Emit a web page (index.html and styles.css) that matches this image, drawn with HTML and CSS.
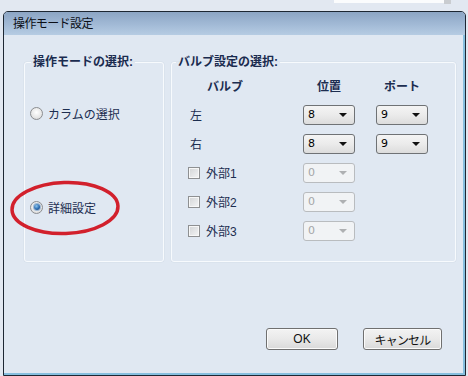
FILE: index.html
```html
<!DOCTYPE html>
<html lang="ja">
<head>
    <meta charset="UTF-8">
    <title>操作モード設定</title>
    <link rel="stylesheet" href="styles.css">
</head>
<body>
    <div class="behind-strip"></div>
    <div class="behind-tab"></div>

    <div class="window">
        <div class="titlebar">操作モード設定</div>
        <div class="client">
            <div class="groups">
                <fieldset class="group mode-group">
                    <legend>操作モードの選択:</legend>
                    <div class="radio"><span class="radio-dot"></span>カラムの選択</div>
                    <div class="radio"><span class="radio-dot checked"></span>詳細設定</div>
                </fieldset>

                <fieldset class="group valve-group">
                    <legend>バルブ設定の選択:</legend>
                    <div class="valve-grid">
                        <div class="head head-valve">バルブ</div>
                        <div class="head">位置</div>
                        <div class="head">ポート</div>

                        <div class="row-label">左</div>
                        <div class="combo">8<span class="arrow"></span></div>
                        <div class="combo">9<span class="arrow"></span></div>

                        <div class="row-label">右</div>
                        <div class="combo">8<span class="arrow"></span></div>
                        <div class="combo">9<span class="arrow"></span></div>

                        <div class="check"><span class="box"></span>外部1</div>
                        <div class="combo disabled">0<span class="arrow"></span></div>
                        <div></div>

                        <div class="check"><span class="box"></span>外部2</div>
                        <div class="combo disabled">0<span class="arrow"></span></div>
                        <div></div>

                        <div class="check"><span class="box"></span>外部3</div>
                        <div class="combo disabled">0<span class="arrow"></span></div>
                        <div></div>
                    </div>
                </fieldset>
            </div>

            <div class="buttons">
                <button class="btn btn-ok">OK</button>
                <button class="btn btn-cancel">キャンセル</button>
            </div>
        </div>
    </div>

    <!-- red marker drawn over the screenshot -->
    <svg class="marker" width="116" height="60" viewBox="0 0 116 60">
        <ellipse cx="57" cy="29" rx="53" ry="25.5" fill="none" stroke="#d2202c" stroke-width="3.5" transform="rotate(-2 57 29)"/>
    </svg>
</body>
</html>
```

FILE: styles.css
```css
* {
    box-sizing: border-box;
}
body {
    margin: 0;
    padding: 11px 2px 0 3px;
    width: 468px;
    height: 376px;
    overflow: hidden;
    background-color: #e2e8f1;
    font-family: 'Liberation Sans', 'Noto Sans CJK JP', sans-serif;
    font-size: 12px;
    position: relative;
}
.behind-strip {
    position: absolute;
    top: 0;
    left: 334px;
    width: 110px;
    height: 3px;
    background-color: #fbfcfd;
}
.behind-tab {
    position: absolute;
    top: 0;
    left: 444px;
    width: 7px;
    height: 4px;
    background-color: #c9ccd0;
}
.window {
    width: 463px;
    height: 365px;
    border: 1px solid #1d2733;
    border-radius: 5px 5px 0 0;
    background-color: #e0e8f2;
    box-shadow: inset -2px -2px 0 #86bfdf;
    display: flex;
    flex-direction: column;
}
.titlebar {
    height: 23px;
    padding: 1px 0 0 9px;
    line-height: 22px;
    color: #0b0f16;
    letter-spacing: -0.6px;
    border-radius: 4px 4px 0 0;
    background: linear-gradient(#8ca5c4, #a2bad6 55%, #b6cce3);
}
.client {
    flex: 1;
    padding: 19px 10px 0 20px;
    display: flex;
    flex-direction: column;
}
.groups {
    display: flex;
    gap: 7px;
}
.group {
    flex-shrink: 0;
    margin: 0;
    padding: 0;
    height: 208px;
    border: 1px solid #f7fafd;
    border-radius: 3px;
    box-shadow: 0 0 0 0.5px #d3dde8;
}
.group legend {
    padding: 0 2px;
    font-weight: bold;
    line-height: 16px;
    color: #1a2b4f;
}
.mode-group {
    width: 140px;
    padding-top: 35px;
    display: flex;
    flex-direction: column;
    gap: 78px;
}
.mode-group legend {
    margin-left: 6px;
}
.valve-group {
    width: 285px;
    padding-top: 1px;
}
.valve-group legend {
    margin-left: 4px;
}
.radio {
    display: flex;
    align-items: center;
    gap: 5px;
    height: 16px;
    margin-left: 5px;
    color: #1c2d50;
}
.radio-dot {
    width: 13px;
    height: 13px;
    border-radius: 50%;
    border: 1px solid #8b8d90;
    background: radial-gradient(circle at 50% 40%, #ffffff, #e6e6e6 60%, #cfcfcf);
    display: flex;
    align-items: center;
    justify-content: center;
}
.radio-dot.checked::after {
    content: "";
    width: 6px;
    height: 6px;
    border-radius: 50%;
    background: radial-gradient(circle at 40% 35%, #8ec6ee, #2a6bb0 55%, #133c70);
    box-shadow: 0 0 0 1px #9fb8d3;
}
.valve-grid {
    display: grid;
    grid-template-columns: 93px 52px 52px;
    grid-auto-rows: 29px;
    column-gap: 21px;
    align-items: center;
    padding-left: 17px;
    color: #1c2d50;
}
.head {
    font-weight: bold;
    text-align: center;
}
.head-valve {
    text-align: left;
    padding-left: 18px;
}
.row-label {
    padding-left: 1px;
}
.check {
    display: flex;
    align-items: center;
    gap: 6px;
    margin-left: -1px;
}
.box {
    width: 12px;
    height: 12px;
    border: 1px solid #8e9092;
    background: linear-gradient(135deg, #d2d4d6, #f4f5f6);
    box-shadow: inset 0 0 0 1px #f7f7f7;
}
.combo {
    position: relative;
    height: 20px;
    padding-left: 4px;
    line-height: 18px;
    border: 1px solid #6f7275;
    border-radius: 3px;
    background: linear-gradient(#f4f4f4, #ebebeb 50%, #dcdcdc);
    color: #000;
    font-family: 'DejaVu Sans', sans-serif;
    font-size: 11px;
}
.arrow {
    position: absolute;
    right: 7px;
    top: 7px;
    width: 0;
    height: 0;
    border-left: 4px solid transparent;
    border-right: 4px solid transparent;
    border-top: 4px solid #111;
}
.combo.disabled {
    border-color: #b9bcbf;
    background: #f1f3f5;
    color: #a4a6a8;
}
.combo.disabled .arrow {
    border-top-color: #aeb0b2;
}
.buttons {
    margin-top: 66px;
    padding-right: 13px;
    display: flex;
    justify-content: flex-end;
    gap: 25px;
}
.btn {
    height: 22px;
    padding: 0;
    border: 1px solid #707070;
    border-radius: 3px;
    background: linear-gradient(#f3f3f3, #e9e9e9 50%, #d9d9d9);
    box-shadow: inset 0 0 0 1px #fbfbfb;
    font-family: 'Liberation Sans', 'Noto Sans CJK JP', sans-serif;
    font-size: 12px;
    color: #111;
}
.btn-ok {
    width: 72px;
}
.btn-cancel {
    width: 79px;
    letter-spacing: -0.8px;
}
.marker {
    position: absolute;
    left: 8px;
    top: 179px;
}
```
